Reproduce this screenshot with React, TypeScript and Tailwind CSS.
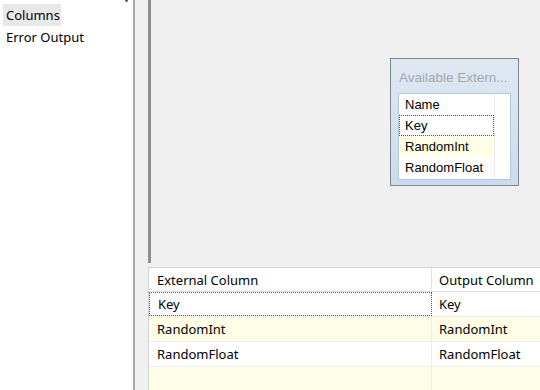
import React from "react";

const segoe = { fontFamily: '"Noto Sans", "Open Sans", sans-serif' };
const tahoma = { fontFamily: '"Liberation Sans", Arial, sans-serif' };

const gridRows = [
  { name: "Key", focused: true, yellow: false },
  { name: "RandomInt", focused: false, yellow: true },
  { name: "RandomFloat", focused: false, yellow: false },
];

export default function App() {
  return (
    <div className="flex h-[390px] w-[540px] overflow-hidden bg-[#f0f0f0] text-[13px] text-black" style={segoe}>
      {/* left nav */}
      <div className="relative flex w-[135px] shrink-0 flex-col border-r-2 border-[#a9a9a9] bg-white pt-[4px]">
        <div className="absolute right-[5px] top-0 h-[2px] w-[3px] rounded-b-full bg-[#666]" />
        <div className="ml-[3px] flex h-[22px] w-[58px] items-center bg-[#e8e8e8] pl-[3px] pt-[1px]">Columns</div>
        <div className="flex h-[22px] items-center pl-[6px] pt-[1px]">Error Output</div>
      </div>

      {/* right side */}
      <div className="flex flex-1 flex-col pl-[13px]">
        <div className="relative h-[263px] border-l-[3px] border-[#8e8e8e] bg-[#f0f0f0]">
          {/* available external columns box */}
          <div className="absolute left-[239px] top-[58px] flex h-[128px] w-[129px] flex-col border border-[#7f8790] bg-gradient-to-b from-[#dfe8f2] to-[#cbdcee] px-[7px]" style={tahoma}>
            <div className="flex h-[34px] items-end pb-[5px] pl-[1px] text-[13.5px] text-[#a3a7ad]">Available Extern...</div>
            <div className="flex h-[87px] border border-[#b6c7da] bg-white text-[13px]">
              <div className="flex w-[96px] flex-col border-r border-[#ececec]">
                <div className="flex h-[21px] items-center pl-[6px]">Name</div>
                <div className="flex h-[21px] items-center border border-dotted border-[#555] pl-[5px]">Key</div>
                <div className="flex h-[21px] items-center bg-[#fffee6] pl-[6px]">RandomInt</div>
                <div className="flex h-[21px] items-center pl-[6px]">RandomFloat</div>
              </div>
              <div className="flex-1" />
            </div>
          </div>
        </div>

        {/* mapping grid */}
        <div className="mt-[4px] flex flex-1 flex-col border-l border-t border-[#d4d4d4] bg-white">
          <div className="flex h-[24px] border-b border-[#e4e4e4]">
            <div className="flex w-[283px] items-center border-r border-[#e4e4e4] pl-[8px] pt-[2px]">External Column</div>
            <div className="flex flex-1 items-center pl-[7px] pt-[2px]">Output Column</div>
          </div>
          {gridRows.map((r) => (
            <div key={r.name} className={`flex h-[25px] border-b border-[#ececec] ${r.yellow ? "bg-[#fffee6]" : "bg-white"}`}>
              <div className={`flex w-[283px] items-center pl-[8px] pt-[1px] ${r.focused ? "border border-dotted border-[#555]" : "border-r border-[#ececec]"}`}>{r.name}</div>
              <div className="flex flex-1 items-center pl-[7px] pt-[1px]">{r.name}</div>
            </div>
          ))}
          <div className="flex flex-1 bg-[#fffee6]">
            <div className="w-[283px] border-r border-[#ececec]" />
            <div className="flex-1" />
          </div>
        </div>
      </div>
    </div>
  );
}
